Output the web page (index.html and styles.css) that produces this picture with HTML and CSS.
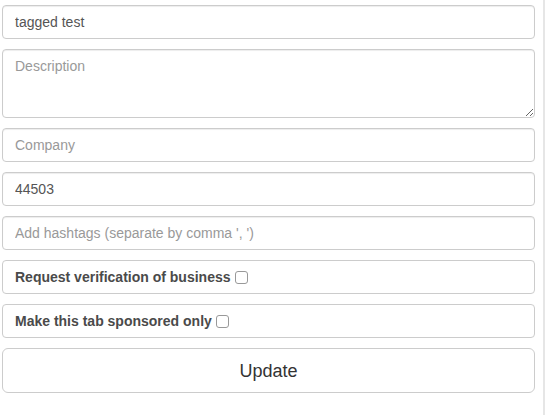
FILE: index.html
```
<!DOCTYPE html>
<html>
<head>
<meta charset="utf-8">
<link rel="stylesheet" href="styles.css">
</head>
<body>
<div class="page">
  <form class="form">
    <input class="field" type="text" value="tagged test">
    <textarea class="field area" placeholder="Description"></textarea>
    <input class="field" type="text" placeholder="Company">
    <input class="field" type="text" value="44503">
    <input class="field" type="text" placeholder="Add hashtags (separate by comma ', ')">
    <label class="field check">Request verification of business <span class="box"></span></label>
    <label class="field check">Make this tab sponsored only <span class="box"></span></label>
    <button class="btn" type="button">Update</button>
  </form>
  <div class="strip"></div>
</div>
</body>
</html>
```
FILE: styles.css
```
html, body {
  margin: 0;
  padding: 0;
  background: #fff;
  font-family: "Liberation Sans", Arial, sans-serif;
}
.page {
  display: flex;
  height: 415px;
}
.form {
  width: 533px;
  margin: 5px 0 0 2px;
  display: flex;
  flex-direction: column;
  gap: 10px;
}
.field {
  box-sizing: border-box;
  display: block;
  width: 100%;
  height: 34px;
  margin: 0;
  padding: 6px 12px;
  font-family: inherit;
  font-size: 14px;
  line-height: 20px;
  color: #555;
  background: #fff;
  border: 1px solid #ccc;
  border-radius: 4px;
  box-shadow: inset 0 1px 1px rgba(0,0,0,0.075);
  outline: none;
}
.field::placeholder {
  color: #999;
}
.area {
  height: 69px;
  resize: vertical;
}
.check {
  display: flex;
  align-items: center;
  gap: 4px;
  font-weight: bold;
  color: #4a4a4a;
  box-shadow: none;
}
.box {
  display: inline-block;
  width: 11px;
  height: 11px;
  border: 1px solid #999;
  border-radius: 3px;
  background: #fff;
  margin-top: 1px;
}
.btn {
  box-sizing: border-box;
  height: 45px;
  width: 100%;
  margin: 0;
  padding: 10px 16px;
  font-family: inherit;
  font-size: 18px;
  line-height: 24px;
  color: #333;
  background: #fff;
  border: 1px solid #ccc;
  border-radius: 6px;
}
.strip {
  margin-left: 8px;
  width: 2px;
  background: #e6e6e6;
}
```
